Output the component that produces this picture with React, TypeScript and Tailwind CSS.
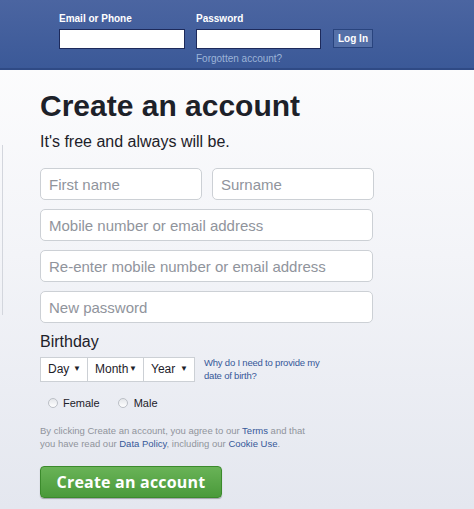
import React from 'react'

const font = { fontFamily: '"Liberation Sans", Arial, sans-serif' }

function Field({ placeholder, className = '' }: { placeholder: string; className?: string }) {
  return (
    <input
      placeholder={placeholder}
      className={`h-[32px] rounded-[5px] border border-[#ccd0d5] bg-white px-[8px] text-[15px] text-[#1d2129] placeholder:text-[#90949c] outline-none ${className}`}
    />
  )
}

function Select({ label, width }: { label: string; width: string }) {
  return (
    <div className={`flex h-[25px] items-center justify-between border border-[#ccd0d5] bg-white pl-[7px] pr-[6px] text-[12px] text-[#1d2129] ${width}`}>
      <span>{label}</span>
      <span className="text-[8px]">▼</span>
    </div>
  )
}

export default function App() {
  return (
    <div style={font} className="relative min-h-[509px] w-[474px] overflow-hidden bg-gradient-to-b from-white via-[#f3f4f8] to-[#e4e7ef]">
      {/* Top bar */}
      <div className="h-[70px] border-b-2 border-[#2f4a85] bg-gradient-to-b from-[#4b65a1] to-[#3b5998] pl-[59px] pt-[12px]">
        <div className="flex items-start gap-[11px]">
          <div className="flex flex-col">
            <label className="text-[10px] font-bold leading-[14px] text-white">Email or Phone</label>
            <input className="mt-[3px] h-[20px] w-[126px] border border-[#1d2a5b] bg-white" />
          </div>
          <div className="flex flex-col">
            <label className="text-[10px] font-bold leading-[14px] text-white">Password</label>
            <input type="password" className="mt-[3px] h-[20px] w-[125px] border border-[#1d2a5b] bg-white" />
            <a className="mt-[4px] text-[10px] leading-[12px] text-[#9cb4d8]">Forgotten account?</a>
          </div>
          <button className="ml-[1px] mt-[17px] h-[19px] w-[40px] border border-[#29447e] bg-[#5570a8] text-[10px] font-bold text-white">
            Log In
          </button>
        </div>
      </div>

      {/* Side edge line */}
      <div className="absolute left-[2px] top-[145px] h-[170px] w-[1px] bg-[#d3d6dd]" />

      {/* Sign-up */}
      <div className="pl-[40px] pt-[16px]">
        <h1 className="text-[30px] font-bold leading-[40px] text-[#1d2129]">Create an account</h1>
        <p className="mt-[6px] text-[16px] leading-[20px] text-[#1d2129]">It's free and always will be.</p>

        <div className="mt-[16px] flex w-[333px] flex-col gap-[9px]">
          <div className="flex gap-[10px]">
            <Field placeholder="First name" className="w-[162px]" />
            <Field placeholder="Surname" className="w-[162px]" />
          </div>
          <Field placeholder="Mobile number or email address" className="w-full" />
          <Field placeholder="Re-enter mobile number or email address" className="w-full" />
          <Field placeholder="New password" className="w-full" />
        </div>

        <div className="mt-[9px] text-[16px] leading-[20px] text-[#1d2129]">Birthday</div>
        <div className="mt-[4px] flex items-center">
          <Select label="Day" width="w-[48px]" />
          <Select label="Month" width="w-[57px] -ml-px" />
          <Select label="Year" width="w-[52px] -ml-px" />
          <a className="ml-[9px] whitespace-nowrap text-[9.5px] leading-[13px] tracking-[-0.2px] text-[#365899]">
            Why do I need to provide my
            <br />
            date of birth?
          </a>
        </div>

        <div className="mt-[13px] flex items-center pl-[8px] text-[11px] text-[#1d2129]">
          <span className="h-[10px] w-[10px] rounded-full border border-[#bbbfc6] bg-gradient-to-b from-[#e4e6ea] to-white" />
          <span className="ml-[5px]">Female</span>
          <span className="ml-[18px] h-[10px] w-[10px] rounded-full border border-[#bbbfc6] bg-gradient-to-b from-[#e4e6ea] to-white" />
          <span className="ml-[6px]">Male</span>
        </div>

        <p className="mt-[12px] whitespace-nowrap text-[9.5px] leading-[13px] text-[#90949c]">
          By clicking Create an account, you agree to our <a className="text-[#365899]">Terms</a> and that
          <br />
          you have read our <a className="text-[#365899]">Data Policy</a>, including our{' '}
          <a className="text-[#365899]">Cookie Use</a>.
        </p>

        <button
          style={{ fontFamily: '"Open Sans", sans-serif' }}
          className="mt-[16px] h-[32px] w-[182px] rounded-[4px] border border-[#3b8a2c] bg-gradient-to-b from-[#69b357] to-[#4a9a3a] text-[16px] font-bold tracking-[0.2px] text-white shadow-[0_1px_1px_rgba(0,0,0,0.3)]"
        >
          Create an account
        </button>
      </div>
    </div>
  )
}
